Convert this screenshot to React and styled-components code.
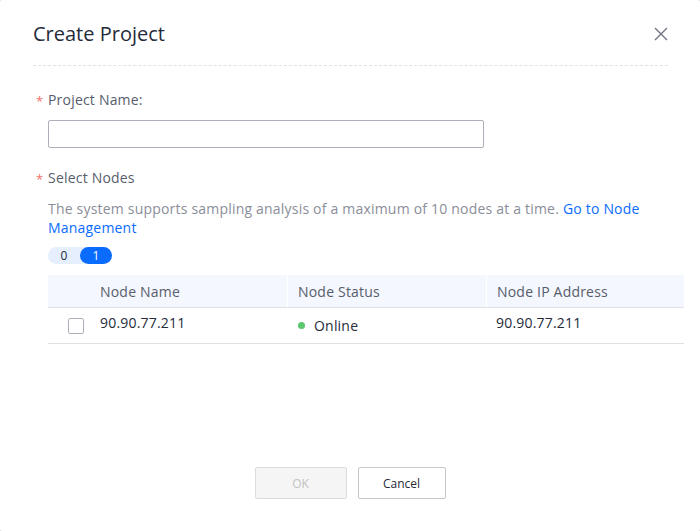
import React from "react";
import styled, { createGlobalStyle } from "styled-components";

const Global = createGlobalStyle`
  html, body { margin: 0; padding: 0; background: #d8d8d8; }
  body { font-family: "Open Sans", "Noto Sans", Arial, sans-serif; }
  * { box-sizing: border-box; }
`;

const Dialog = styled.div`
  width: 700px;
  height: 531px;
  background: #fff;
  border-radius: 2px;
  display: flex;
  flex-direction: column;
  overflow: hidden;
`;

const Header = styled.div`
  display: flex;
  align-items: center;
  justify-content: space-between;
  height: 66px;
  margin: 0 32px 0 33px;
  border-bottom: 1px dashed #dfe1e6;
  padding-top: 2px;
`;

const Title = styled.h2`
  margin: 0;
  font-size: 20px;
  font-weight: 400;
  color: #252b3a;
`;

const Close = styled.button`
  border: 0;
  background: none;
  padding: 0;
  width: 16px;
  height: 16px;
  display: flex;
  align-items: center;
  justify-content: center;
  margin-right: -1px;
  cursor: pointer;
`;

const Body = styled.div`
  padding: 23px 16px 0 36px;
  display: flex;
  flex-direction: column;
  letter-spacing: 0.2px;
`;

const Label = styled.div`
  display: flex;
  align-items: center;
  height: 20px;
  font-size: 14px;
  color: #575d6c;
  margin-bottom: ${(p) => p.$mb || 0}px;
`;

const Star = styled.span`
  color: #f66f6a;
  font-size: 13px;
  width: 12px;
  padding-top: 3px;
`;

const Input = styled.input`
  margin-left: 12px;
  width: 436px;
  height: 28px;
  border: 1px solid #adb0b8;
  border-radius: 2px;
  outline: none;
  font-size: 14px;
  margin-bottom: 19px;
`;

const Indent = styled.div`
  margin-left: 12px;
`;

const Desc = styled.p`
  margin: 0;
  width: 620px;
  font-size: 14px;
  line-height: 19px;
  color: #8a8e99;
`;

const Link = styled.a`
  color: #0a6cff;
  text-decoration: none;
`;

const Toggle = styled.div`
  display: inline-flex;
  margin-top: 10px;
  height: 17px;
  border-radius: 9px;
  background: #e6effd;
`;

const ToggleItem = styled.span`
  width: 32px;
  height: 17px;
  border-radius: 9px;
  display: flex;
  align-items: center;
  justify-content: center;
  font-size: 12px;
  color: ${(p) => (p.$active ? "#fff" : "#252b3a")};
  background: ${(p) => (p.$active ? "#0a6cff" : "transparent")};
`;

const Table = styled.div`
  margin-top: 10px;
  width: 636px;
  display: grid;
  grid-template-columns: 239px 199px 198px;
`;

const HeadCell = styled.div`
  height: 33px;
  background: #f4f7fd;
  border-bottom: 1px solid #dfe1e6;
  border-left: ${(p) => (p.$first ? "0" : "1px solid #fff")};
  padding-left: ${(p) => (p.$first ? 52 : 10)}px;
  display: flex;
  align-items: center;
  font-size: 14px;
  color: #575d6c;
`;

const Cell = styled.div`
  height: 36px;
  border-bottom: 1px solid #dfe1e6;
  padding-left: ${(p) => (p.$first ? 20 : 10)}px;
  padding-top: ${(p) => p.$pt || 5}px;
  display: flex;
  align-items: flex-start;
  font-size: 14px;
  color: #252b3a;
`;

const Check = styled.span`
  width: 16px;
  height: 16px;
  border: 1px solid #adb0b8;
  border-radius: 2px;
  margin-top: 5px;
  margin-right: 16px;
  background: #fff;
`;

const Dot = styled.span`
  width: 7px;
  height: 7px;
  border-radius: 50%;
  background: #5cc86b;
  margin: 6px 9px 0 1px;
`;

const Footer = styled.div`
  margin-top: auto;
  padding-bottom: 32px;
  display: flex;
  justify-content: center;
  gap: 11px;
`;

const Button = styled.button`
  height: 32px;
  width: ${(p) => p.$w}px;
  border-radius: 2px;
  font-family: inherit;
  font-size: 12px;
  border: 1px solid ${(p) => (p.disabled ? "#dcdcdc" : "#c8c8c8")};
  background: ${(p) => (p.disabled ? "#f5f5f5" : "#fff")};
  color: ${(p) => (p.disabled ? "#c2c2c2" : "#252b3a")};
`;

export default function App() {
  return (
    <>
      <Global />
      <Dialog>
        <Header>
          <Title>Create Project</Title>
          <Close aria-label="close">
            <svg width="14" height="14" viewBox="0 0 14 14">
              <path d="M1 1L13 13M13 1L1 13" stroke="#6f7480" strokeWidth="1.4" />
            </svg>
          </Close>
        </Header>
        <Body>
          <Label $mb={11}>
            <Star>*</Star>Project Name:
          </Label>
          <Input />
          <Label $mb={12}>
            <Star>*</Star>Select Nodes
          </Label>
          <Indent>
            <Desc>
              The system supports sampling analysis of a maximum of 10 nodes at a time.{" "}
              <Link href="#">Go to Node Management</Link>
            </Desc>
            <Toggle>
              <ToggleItem>0</ToggleItem>
              <ToggleItem $active>1</ToggleItem>
            </Toggle>
            <Table>
              <HeadCell $first>Node Name</HeadCell>
              <HeadCell>Node Status</HeadCell>
              <HeadCell>Node IP Address</HeadCell>
              <Cell $first>
                <Check />
                90.90.77.211
              </Cell>
              <Cell $pt={8}>
                <Dot />
                Online
              </Cell>
              <Cell>90.90.77.211</Cell>
            </Table>
          </Indent>
        </Body>
        <Footer>
          <Button disabled $w={92}>OK</Button>
          <Button $w={88}>Cancel</Button>
        </Footer>
      </Dialog>
    </>
  );
}
